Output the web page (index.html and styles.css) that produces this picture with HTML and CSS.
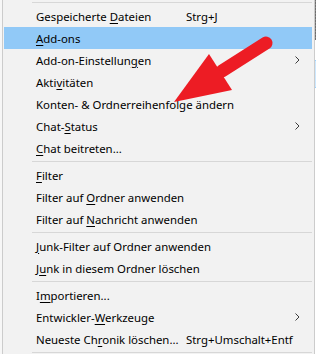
FILE: index.html
```html
<!DOCTYPE html>
<html lang="de">
<head>
    <meta charset="UTF-8">
    <meta name="viewport" content="width=device-width, initial-scale=1.0">
    <title>Extras-Menü</title>
    <link rel="stylesheet" href="styles.css">
</head>
<body>
    <div class="screen">
        <div class="app-left"></div>
        <div class="menu">
            <div class="sep"></div>
            <div class="item"><span class="label">Gespeicherte <u>D</u>ateien</span><span class="key">Strg+J</span></div>
            <div class="item active"><span class="label"><u>A</u>dd-ons</span></div>
            <div class="item"><span class="label">Add-on-Einstellun<u>g</u>en</span><span class="key"></span><span class="sub"><svg width="5" height="8" viewBox="0 0 5 8"><polyline points="0.5,0.5 4,4 0.5,7.5" fill="none" stroke="#3c3c3c" stroke-width="1"/></svg></span></div>
            <div class="item"><span class="label">Akti<u>v</u>itäten</span></div>
            <div class="item"><span class="label">Konten- &amp; Ordnerreihenfolge ändern</span></div>
            <div class="item"><span class="label">Chat-<u>S</u>tatus</span><span class="key"></span><span class="sub"><svg width="5" height="8" viewBox="0 0 5 8"><polyline points="0.5,0.5 4,4 0.5,7.5" fill="none" stroke="#3c3c3c" stroke-width="1"/></svg></span></div>
            <div class="item"><span class="label"><u>C</u>hat beitreten...</span></div>
            <div class="sep"></div>
            <div class="item"><span class="label"><u>F</u>ilter</span></div>
            <div class="item"><span class="label">Filter auf <u>O</u>rdner anwenden</span></div>
            <div class="item"><span class="label">Filter auf <u>N</u>achricht anwenden</span></div>
            <div class="sep"></div>
            <div class="item"><span class="label"><u>J</u>unk-Filter auf Ordner anwenden</span></div>
            <div class="item"><span class="label">J<u>u</u>nk in diesem Ordner löschen</span></div>
            <div class="sep"></div>
            <div class="item"><span class="label">I<u>m</u>portieren...</span></div>
            <div class="item"><span class="label">Entwickler-<u>W</u>erkzeuge</span><span class="key"></span><span class="sub"><svg width="5" height="8" viewBox="0 0 5 8"><polyline points="0.5,0.5 4,4 0.5,7.5" fill="none" stroke="#3c3c3c" stroke-width="1"/></svg></span></div>
            <div class="item"><span class="label">Neueste Ch<u>r</u>onik löschen...</span><span class="key">Strg+Umschalt+Entf</span></div>
            <div class="sep"></div>
        </div>
        <div class="app-right">
            <div class="scroll-thumb"></div>
            <div class="sel-row"></div>
        </div>

        <!-- Markierungspfeil -->
        <svg class="arrow" width="316" height="354" viewBox="0 0 316 354">
            <line x1="266" y1="43" x2="222" y2="71" stroke="#ed1c24" stroke-width="13" stroke-linecap="round"/>
            <polygon points="209,54 232,90 174,102" fill="#ed1c24"/>
        </svg>
    </div>
</body>
</html>
```

FILE: styles.css
```css
body {
    margin: 0;
    font-family: "Noto Sans", "Open Sans", sans-serif;
    font-size: 11.4px;
    color: #000000;
}
.screen {
    position: relative;
    width: 316px;
    height: 354px;
    overflow: hidden;
    display: flex;
    background: #ffffff;
}
.app-left {
    width: 2px;
    background: #f7f7f7;
}
.menu {
    width: 308px;
    background-color: #f2f2f2;
    border-left: 1px solid #cccccc;
    border-right: 1px solid #cccccc;
    padding: 0 2px 0 1px;
}
.item {
    display: grid;
    grid-template-columns: 150px 1fr 20px;
    align-items: center;
    height: 22px;
    padding-left: 32px;
    white-space: nowrap;
}
.item.active {
    background-color: #91c9f7;
}
.item u {
    text-underline-offset: 2px;
}
.sub {
    display: flex;
    align-items: center;
    padding-left: 3px;
}
.sep {
    height: 5px;
    margin-left: 28px;
    display: flex;
    align-items: center;
}
.sep::after {
    content: "";
    display: block;
    width: 100%;
    height: 1px;
    background-color: #d7d7d7;
}
.app-right {
    flex: 1;
    background: #ffffff;
}
.scroll-thumb {
    height: 40px;
    background: repeating-linear-gradient(0deg, #6e6e6e 0, #6e6e6e 2px, #8a8a8a 2px, #8a8a8a 3px);
}
.sel-row {
    margin-top: 20px;
    height: 26px;
    background: #cce8ff;
    border-top: 1px solid #99d1ff;
    border-bottom: 1px solid #99d1ff;
}
.arrow {
    position: absolute;
    left: 0;
    top: 0;
    pointer-events: none;
}
```
